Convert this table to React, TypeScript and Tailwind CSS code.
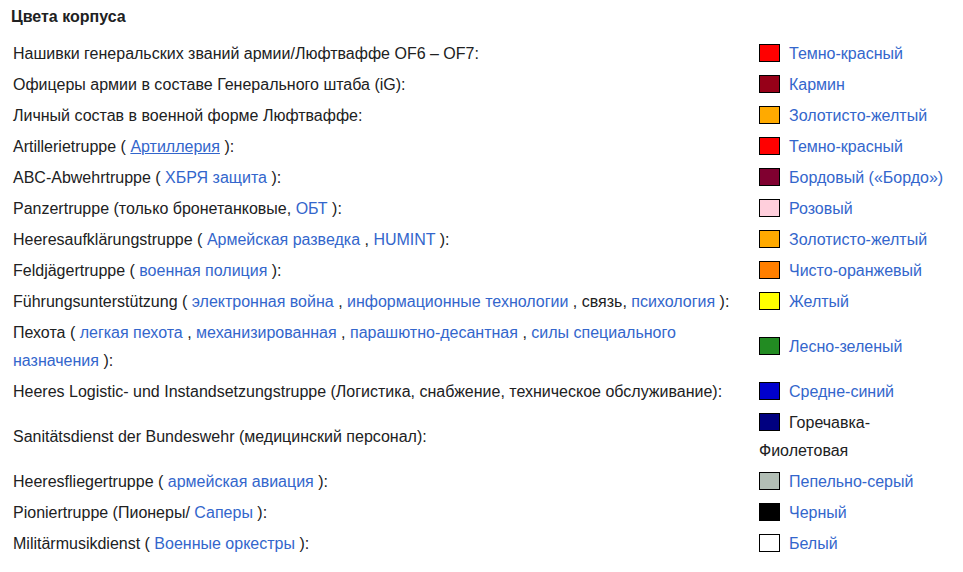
import React from "react";

const L = ({ children, u }: { children: React.ReactNode; u?: boolean }) => (
  <a className={"text-[#3366cc] " + (u ? "underline" : "no-underline")} href="#">
    {children}
  </a>
);

type Row = { left: React.ReactNode; color: string; name: string; link?: boolean };

const rows: Row[] = [
  { left: <>Нашивки генеральских званий армии/Люфтваффе OF6 – OF7:</>, color: "#ff0000", name: "Темно-красный", link: true },
  { left: <>Офицеры армии в составе Генерального штаба (iG):</>, color: "#960018", name: "Кармин", link: true },
  { left: <>Личный состав в военной форме Люфтваффе:</>, color: "#ffaa00", name: "Золотисто-желтый", link: true },
  { left: <>Artillerietruppe ( <L u>Артиллерия</L> ):</>, color: "#ff0000", name: "Темно-красный", link: true },
  { left: <>ABC-Abwehrtruppe ( <L>ХБРЯ защита</L> ):</>, color: "#800030", name: "Бордовый («Бордо»)", link: true },
  { left: <>Panzertruppe (только бронетанковые, <L>ОБТ</L> ):</>, color: "#ffcfdc", name: "Розовый", link: true },
  { left: <>Heeresaufklärungstruppe ( <L>Армейская разведка</L> , <L>HUMINT</L> ):</>, color: "#ffaa00", name: "Золотисто-желтый", link: true },
  { left: <>Feldjägertruppe ( <L>военная полиция</L> ):</>, color: "#ff7f00", name: "Чисто-оранжевый", link: true },
  { left: <>Führungsunterstützung ( <L>электронная война</L> , <L>информационные технологии</L> , связь, <L>психология</L> ):</>, color: "#ffff00", name: "Желтый", link: true },
  { left: <>Пехота ( <L>легкая пехота</L> , <L>механизированная</L> , <L>парашютно-десантная</L> , <L>силы специального</L> <L>назначения</L> ):</>, color: "#228b22", name: "Лесно-зеленый", link: true },
  { left: <>Heeres Logistic- und Instandsetzungstruppe (Логистика, снабжение, техническое обслуживание):</>, color: "#0000cd", name: "Средне-синий", link: true },
  { left: <>Sanitätsdienst der Bundeswehr (медицинский персонал):</>, color: "#000080", name: "Горечавка-Фиолетовая", link: false },
  { left: <>Heeresfliegertruppe ( <L>армейская авиация</L> ):</>, color: "#b2beb5", name: "Пепельно-серый", link: true },
  { left: <>Pioniertruppe (Пионеры/ <L>Саперы</L> ):</>, color: "#000000", name: "Черный", link: true },
  { left: <>Militärmusikdienst ( <L>Военные оркестры</L> ):</>, color: "#ffffff", name: "Белый", link: true },
];

export default function App() {
  return (
    <div className="w-[963px] h-[572px] bg-white text-[#202122] overflow-hidden" style={{ fontFamily: '"Liberation Sans", Arial, sans-serif' }}>
      <div className="pl-[11px] pt-[8px] text-[16px] font-bold leading-[18px]">Цвета корпуса</div>
      <table className="mt-[12px] border-collapse text-[16px] table-fixed w-[950px]">
        <colgroup>
          <col className="w-[759px]" />
          <col className="w-[191px]" />
        </colgroup>
        <tbody>
          {rows.map((r, i) => (
            <tr key={i}>
              <td className="pl-[13px] pr-[14px] py-[1.5px] leading-[28px] align-middle">{r.left}</td>
              <td className="py-[1.5px] leading-[28px] align-middle">
                <span
                  className="inline-block w-[21px] h-[18px] border border-black align-middle mr-[9px] relative -top-px"
                  style={{ backgroundColor: r.color }}
                />
                {r.link ? <L>{r.name}</L> : <span>{r.name}</span>}
              </td>
            </tr>
          ))}
        </tbody>
      </table>
    </div>
  );
}
